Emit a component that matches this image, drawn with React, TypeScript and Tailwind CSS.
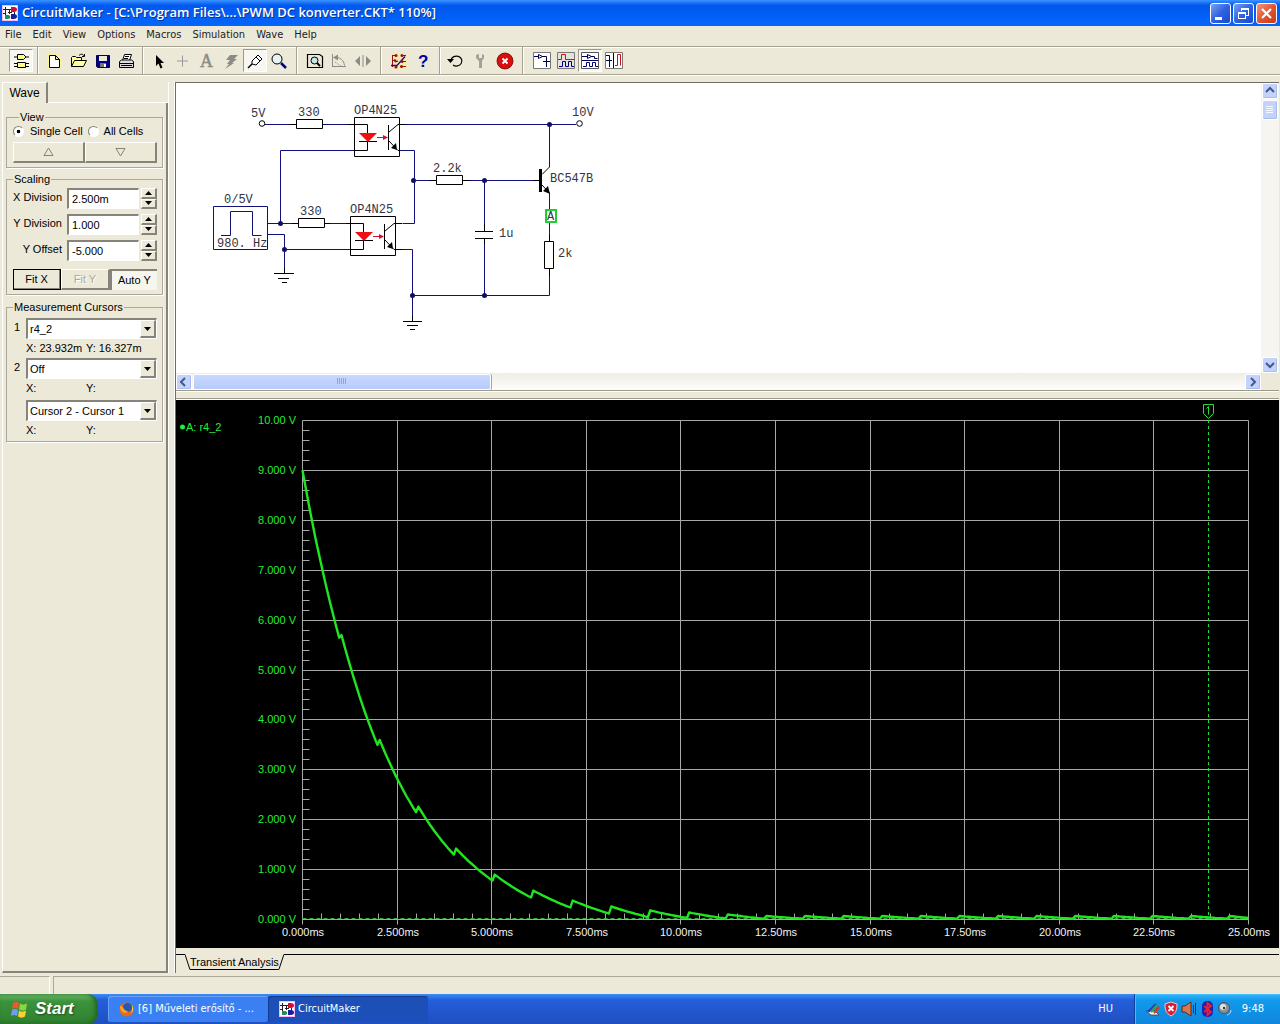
import { useState, type ReactNode } from 'react'
import clsx from 'clsx'

const UI = "font-['Liberation_Sans',Arial,sans-serif]"
const TAHOMA = "font-['DejaVu_Sans_Condensed','DejaVu_Sans',sans-serif]"

const MENUS = ['File', 'Edit', 'View', 'Options', 'Macros', 'Simulation', 'Wave', 'Help']

function AppIcon() {
  return (
    <svg width="16" height="16" viewBox="0 0 16 16" className="shrink-0" aria-hidden="true">
      <rect width="16" height="16" fill="#f9b9f4" />
      <rect x="1" y="1" width="14" height="14" fill="#fff" />
      <path d="M1 4.500h8M3.500 2v9M1 8.500h2M6 7.500h4M7.500 5v4M12.500 7v3" stroke="#222" fill="none" />
      <path d="M9 2h3c4 0 4 5 0 5H9z" fill="#d0102e" />
      <path d="M9 9h3c4 0 4 5 0 5H9z" fill="#16209c" />
      <path d="M3 10h3c3 0 3 4 0 4H3z" fill="#1d8f5a" />
    </svg>
  )
}

/* ---------- title bar and menu ---------- */

function TitleBar() {
  const btn = 'flex size-[21px] items-center justify-center rounded-[3px] border border-white'
  const blue = 'bg-linear-to-br from-[#7aa0f5] via-[#2f62e0] to-[#1a49cc]'
  return (
    <header className="flex h-[26px] shrink-0 items-center bg-linear-to-b from-[#3a92ff] via-[#0058ee] via-20% to-[#0566fb] pr-[3px] pl-[2px]">
      <AppIcon />
      <h1 className="ml-1 flex-1 font-['Open_Sans','Noto_Sans',sans-serif] text-[13px] font-semibold text-white [text-shadow:1px_1px_#0a2f9a]">
        CircuitMaker - [C:\Program Files\...\PWM DC konverter.CKT* 110%]
      </h1>
      <div className="flex gap-[2px]">
        <button type="button" aria-label="Minimize" className={clsx(btn, blue)}>
          <svg width="19" height="19"><path d="M4 13h7v3H4z" fill="#fff" /></svg>
        </button>
        <button type="button" aria-label="Restore" className={clsx(btn, blue)}>
          <svg width="19" height="19" fill="none" stroke="#fff" shapeRendering="crispEdges">
            <path d="M7 7V4.500h7.500V11H12M7 5.500h8M4.500 8.500h7v6h-7zM4 9.500h8" />
          </svg>
        </button>
        <button type="button" aria-label="Close" className={clsx(btn, 'bg-linear-to-br from-[#f0957a] via-[#e2552f] to-[#c83a12]')}>
          <svg width="19" height="19"><path d="M5 5l9 9M14 5l-9 9" stroke="#fff" strokeWidth="2.200" /></svg>
        </button>
      </div>
    </header>
  )
}

function MenuBar() {
  return (
    <nav className={clsx(TAHOMA, 'flex h-[18px] shrink-0 items-center gap-[11px] pl-[5px] text-[11px] text-[#222]')}>
      {MENUS.map((m) => (
        <button key={m} type="button" className="leading-4">{m}</button>
      ))}
    </nav>
  )
}

/* ---------- toolbar ---------- */

function Tool({ label, pressed, children }: { label: string; pressed?: boolean; children: ReactNode }) {
  return (
    <button
      type="button"
      aria-label={label}
      className={clsx(
        'flex h-[23px] w-6 shrink-0 items-center justify-center',
        pressed && 'border-t border-r border-b border-l border-t-[#9c9a8c] border-r-white border-b-white border-l-[#9c9a8c] bg-[#f7f6f0]',
      )}
    >
      <svg width="20" height="20" viewBox="0 0 20 20" className="shrink-0 overflow-visible" fill="none" stroke="#000">
        {children}
      </svg>
    </button>
  )
}

function Separator({ size = 'w-[9px]' }: { size?: string }) {
  return (
    <div className={clsx(size, 'flex h-full shrink-0 justify-center')}>
      <div className="w-[2px] border-r border-l border-r-white border-l-[#a5a294]" />
    </div>
  )
}

function Toolbar() {
  return (
    <div className="mt-[2px] flex h-[29px] shrink-0 items-center border-t border-b border-[#a5a294] pl-[9px] shadow-[inset_0_1px_#fff,0_1px_#fff]">
      <Tool label="Parts" pressed>
        <path d="M6.500 3.500h6l2.500 2.500-2.500 2.500h-6zM3 6h3M15 6h3" fill="#ffff88" />
        <path d="M6.500 11.500h8v5h-8zM3 12.500h3M3 15.500h3M15 12.500h3M15 15.500h3" fill="#ffff88" />
      </Tool>
      <Separator />
      <Tool label="New">
        <path d="M4 3h10l3 4v10H4z" fill="#ffff66" stroke="none" opacity=".6" />
        <path d="M5.500 4.500h6l4 4v8h-10zM11.500 4.500v4h4" fill="#fff" />
      </Tool>
      <Tool label="Open">
        <path d="M3.500 15.500v-9l1-1h3l1 1h5v3M3.500 15.500l3-6h12l-3 6z" fill="#ffff99" />
        <path d="M11 4.500c2-2 4-1.500 5 .5M16.500 3v2.500H14" />
      </Tool>
      <Tool label="Save">
        <path d="M4.500 4.500h13v12H5.500l-1-1z" fill="#000080" stroke="#000055" />
        <path d="M7 5h8v5H7z" fill="#ece9d8" stroke="none" />
        <path d="M8 12h6v4H8z" fill="#777" stroke="none" />
        <path d="M12 13h2v3h-2z" fill="#fff" stroke="none" />
      </Tool>
      <Tool label="Print">
        <path d="M6.500 9.500l2-6h7l-2 6M9 5.500h4M8 7.500h4" fill="#fff" />
        <path d="M3.500 10.500l2-1.500h10l2 1.500v6h-14zM3.500 12.500h14M5 14.500h11" fill="#ddd" />
      </Tool>
      <Separator />
      <Tool label="Select">
        <path d="M7 4v11l2.500-2.500 2 5 2-1-2-4.500H15z" fill="#000" stroke="none" />
      </Tool>
      <Tool label="Wire"><path d="M9.500 4.500v11M4 10h11" stroke="#999" /></Tool>
      <Tool label="Text">
        <text x="3" y="16" fill="#8c8c86" stroke="#8c8c86" strokeWidth=".5" className="font-['Liberation_Serif',serif] text-[18px]">A</text>
      </Tool>
      <Tool label="Delete">
        <path d="M9 4h8l-4 4h3l-5 4h2l-9 6 4-5H6l3-4H5z" fill="#8c8c86" stroke="none" />
      </Tool>
      <Tool label="Probe" pressed>
        <path d="M3 17l4-4" strokeWidth="1.500" />
        <path d="M7 13l0-3 5-5 1-1 4 4-1 1-5 5zM11 6l4 4" fill="#fff" />
      </Tool>
      <Tool label="Zoom">
        <circle cx="8" cy="8" r="5" fill="#e8f4f4" />
        <path d="M12 12l5 5" stroke="#00008b" strokeWidth="2.500" />
      </Tool>
      <Separator size="w-3" />
      <Tool label="Fit to window">
        <path d="M2.500 3.500h12l3 2v11h-15z" strokeWidth="1.200" />
        <circle cx="9.500" cy="9.500" r="3.500" fill="#c9e6e6" />
        <path d="M12 12l3 3" strokeWidth="2" />
      </Tool>
      <Tool label="Rotate">
        <path d="M3.500 3v13M3 15.500h14M5 6.500c6-1 10 3 10.500 8" stroke="#8c8c86" />
        <path d="M4 6.500l5-3v6z" fill="#8c8c86" stroke="none" />
        <path d="M6 11l6 4" stroke="#8c8c86" strokeDasharray="1 1" />
      </Tool>
      <Tool label="Mirror">
        <path d="M7 5v10l-5-5zM13 5v10l5-5z" fill="#8c8c86" stroke="none" />
        <path d="M10 4v12" stroke="#8c8c86" />
      </Tool>
      <Separator size="w-3" />
      <Tool label="Connections">
        <path d="M2 2h16v16H2z" fill="#ffee66" stroke="none" opacity=".35" />
        <path d="M3.500 4v12M3 4.500h4M3 9.500h3M12 15.500h5M13 10.500h4M13 4.500h4" stroke="#a01010" />
        <path d="M2 14.500h6l8-9M6 11l3-1" stroke="#10109a" strokeWidth="1.300" />
        <g fill="#a01010" stroke="none">
          <circle cx="7" cy="4.500" r="1.500" /><circle cx="13" cy="4.500" r="1.500" />
          <circle cx="6" cy="9.500" r="1.300" /><circle cx="13" cy="10.500" r="1.500" />
          <circle cx="7" cy="16" r="1.500" /><circle cx="12.500" cy="15.500" r="1.500" />
        </g>
      </Tool>
      <Tool label="Help">
        <text x="5" y="16" fill="#0000a0" stroke="none" className="font-['Liberation_Sans',sans-serif] text-[17px] font-bold">?</text>
      </Tool>
      <Separator />
      <Tool label="Reset">
        <path d="M5 9a5.500 5 0 1 1 2 5" strokeWidth="1.200" />
        <path d="M1 8h7l-3.500 4z" fill="#000" stroke="none" />
      </Tool>
      <Tool label="Step">
        <path d="M6 4v3l3 3v7h3v-7l2-3V4l-2-1v4H9V3z" fill="#a3a199" stroke="none" />
      </Tool>
      <Tool label="Stop">
        <circle cx="11" cy="10" r="8" fill="#d80f0f" stroke="#7a0000" strokeWidth=".8" />
        <path d="M8.500 7.500l5 5M13.500 7.500l-5 5" stroke="#fff" strokeWidth="1.800" />
      </Tool>
      <Separator size="w-[14px]" />
      <Tool label="Schematic view">
        <path d="M1.500 1.500h17v16h-17z" fill="#fff" stroke="#777" />
        <path d="M2 5.500h4M6.500 3.500v4l4-2zM10 5.500h4.500v5M11 10.500h7M14.500 11v5" stroke="#000050" />
      </Tool>
      <Tool label="Waveform view">
        <path d="M1.500 1.500h17v16h-17z" fill="#e4e2da" stroke="#777" />
        <path d="M2 8.500h3.500v-5h4v5h9" stroke="#d01010" />
        <path d="M3 15.500h3.500v-5h3v5h3v-5h3v5h2.500" stroke="#000080" />
      </Tool>
      <Tool label="Split horizontal" pressed>
        <path d="M1.500 1.500h17v16h-17z" fill="#fff" stroke="#555" />
        <path d="M2 5.500h5M7.500 3.500v4l4-2zM11 5.500h3.500v2h3M2 9.500h16" stroke="#000050" />
        <path d="M3 15.500h3.500v-4h3v4h3v-4h3v4h2.500" stroke="#000080" />
      </Tool>
      <Tool label="Split vertical">
        <path d="M1.500 1.500h17v16h-17z" fill="#fff" stroke="#777" />
        <path d="M2 4.500h3.500v5M2 9.500h6M5.500 10v6M9.500 2v15" stroke="#000050" />
        <path d="M11 14.500h2.500v-11h3v11" stroke="#d01010" />
      </Tool>
    </div>
  )
}

/* ---------- left panel ---------- */

const SUNKEN = 'border-t-2 border-l-2 border-r border-b border-t-[#85837a] border-l-[#85837a] border-r-white border-b-white bg-white'
const RAISED = 'border-t border-l border-r-2 border-b-2 border-t-white border-l-white border-r-[#85837a] border-b-[#85837a] bg-[#ece9d8]'

function Group({ title, className, children }: { title: string; className?: string; children: ReactNode }) {
  return (
    <fieldset className={clsx('min-w-0 border border-[#aca899] pr-[5px] shadow-[1px_1px_#fff]', className)}>
      <legend className="ml-[6px] px-px leading-3">{title}</legend>
      {children}
    </fieldset>
  )
}

function ScaleField({ id, label, value }: { id: string; label: string; value: string }) {
  const [text, setText] = useState(value)
  return (
    <div className="flex h-[21px]">
      <label htmlFor={id} className="w-[55px] text-right leading-[19px]">{label}</label>
      <input
        id={id}
        value={text}
        onChange={(e) => setText(e.target.value)}
        className={clsx(SUNKEN, 'ml-[5px] min-w-0 flex-1 px-[3px]')}
      />
      <div className="ml-[2px] flex w-4 flex-col">
        <button type="button" aria-label={`${label} up`} className={clsx(RAISED, 'flex flex-1 items-center justify-center')}>
          <svg width="7" height="4"><path d="M0 4h7L3.500 0z" /></svg>
        </button>
        <button type="button" aria-label={`${label} down`} className={clsx(RAISED, 'flex flex-1 items-center justify-center')}>
          <svg width="7" height="4"><path d="M0 0h7L3.500 4z" /></svg>
        </button>
      </div>
    </div>
  )
}

function Combo({ label, number, options }: { label: string; number?: string; options: string[] }) {
  return (
    <label className="flex h-[21px]">
      <span className="w-[19px] pl-[7px] leading-[19px]">{number}</span>
      <span className="relative min-w-0 flex-1">
        <select aria-label={label} className={clsx(SUNKEN, 'h-full w-full appearance-none pl-[2px] outline-none')}>
          {options.map((o) => <option key={o}>{o}</option>)}
        </select>
        <span className={clsx(RAISED, 'pointer-events-none absolute top-[2px] right-px bottom-px flex w-4 items-center justify-center')}>
          <svg width="7" height="4"><path d="M0 0h7L3.500 4z" /></svg>
        </span>
      </span>
    </label>
  )
}

function Readout({ x, y }: { x?: string; y?: string }) {
  return (
    <p className="ml-[19px] flex h-[19px] items-center">
      <span className="w-[60px] whitespace-nowrap">X: {x}</span>
      <span className="whitespace-nowrap">Y: {y}</span>
    </p>
  )
}

function WavePanel() {
  const [cells, setCells] = useState('single')
  const radio =
    'size-[11px] appearance-none rounded-full border border-[#85837a] border-r-white border-b-white bg-white checked:bg-[radial-gradient(#000_28%,#fff_32%)]'
  return (
    <aside className={clsx(UI, 'flex w-[168px] shrink-0 flex-col pl-[2px] text-[11px] text-black')}>
      <div className="flex h-[21px]">
        <button type="button" className="w-[46px] border-t border-r-2 border-l border-t-white border-r-[#85837a] border-l-white pb-px text-[12px]">
          Wave
        </button>
        <div className="flex-1 border-b border-white" />
      </div>
      <div className="flex-1 border-r-2 border-b-2 border-l border-r-[#85837a] border-b-[#85837a] border-l-white pt-2 pr-[3px] pl-[3px]">
        <Group title="View" className="h-[57px] pl-[6px]">
          <div className="mt-px flex h-[14px] items-center">
            <label className="flex items-center gap-[6px]">
              <input type="radio" name="cells" className={radio} checked={cells === 'single'} onChange={() => setCells('single')} />
              Single Cell
            </label>
            <label className="ml-[5px] flex items-center gap-[5px]">
              <input type="radio" name="cells" className={radio} checked={cells === 'all'} onChange={() => setCells('all')} />
              All Cells
            </label>
          </div>
          <div className="mt-1 flex h-[21px]">
            <button type="button" aria-label="Previous cell" className={clsx(RAISED, 'flex flex-1 items-center justify-center')}>
              <svg width="11" height="10" fill="none" stroke="#85837a"><path d="M1 8.500h9L5.500 1z" /></svg>
            </button>
            <button type="button" aria-label="Next cell" className={clsx(RAISED, 'flex flex-1 items-center justify-center')}>
              <svg width="11" height="10" fill="none" stroke="#85837a"><path d="M1 1.500h9L5.500 9z" /></svg>
            </button>
          </div>
        </Group>

        <Group title="Scaling" className="mt-[5px] h-[122px]">
          <div className="mt-[3px] flex flex-col gap-[5px]">
            <ScaleField id="x-division" label="X Division" value="2.500m" />
            <ScaleField id="y-division" label="Y Division" value="1.000" />
            <ScaleField id="y-offset" label="Y Offset" value="-5.000" />
          </div>
          <div className="mt-2 flex h-[21px] pl-[6px]">
            <button type="button" className={clsx(RAISED, 'flex-1 outline-1 -outline-offset-1 outline-black')}>Fit X</button>
            <button type="button" disabled className={clsx(RAISED, 'flex-1 text-[#aca899] [text-shadow:1px_1px_#fff]')}>Fit Y</button>
            <button type="button" className="flex-1 border-t-2 border-l-2 border-[#85837a] bg-[#f6f5ee]">Auto Y</button>
          </div>
        </Group>

        <Group title="Measurement Cursors" className="mt-[6px] h-[141px]">
          <div className="mt-[5px]">
            <Combo label="Cursor 1" number="1" options={['r4_2', 'Off']} />
            <Readout x="23.932m" y="16.327m" />
            <Combo label="Cursor 2" number="2" options={['Off', 'r4_2']} />
            <Readout />
          </div>
          <div className="mt-[2px]">
            <Combo label="Cursor difference" options={['Cursor 2 - Cursor 1']} />
            <Readout />
          </div>
        </Group>
      </div>
    </aside>
  )
}

/* ---------- schematic ---------- */

function Opto({ x, y }: { x: number; y: number }) {
  return (
    <g transform={`translate(${x} ${y})`} stroke="#000" fill="none">
      <path d="M.500 .500h45v39h-45zM0 7.500h13.500V16M0 33.500h13.500V24M5 24.500h18" />
      <path d="M5 16h18l-9 9z" fill="#f01010" stroke="none" />
      <path d="M23 20.500h7" stroke="#d0102c" />
      <path d="M29 18l5 2.500-5 2.500z" fill="#d0102c" stroke="none" />
      <path d="M34.500 8v25M35 15l9-7.500h2M35 24l9 9.500h2" />
      <path d="M43 33l-6-2 5-5z" fill="#000" stroke="none" />
    </g>
  )
}

function Schematic() {
  return (
    <svg
      viewBox="176 83 460 290"
      width="460"
      height="290"
      className="shrink-0 font-['Liberation_Mono','Courier_New',monospace] text-[12px]"
      aria-label="Circuit schematic"
    >
      <g fill="none" stroke="#10107a">
        <path d="M265 124.500h25M322 124.500h26M354 150.500h-73.500v73M268 223.500h24M330 223.500h16M268 234.500h16.500v34M284 249.500h66" />
        <path d="M406 124.500h170M549.500 124v43M400 150.500h14.500v73h-12M414 180.500h16M470 180.500h63M484.500 180v44M484.500 240v56" />
        <path d="M402 249.500h10.500v68M412 295.500h137.500v-20M549.500 193v42M213.500 206.500h54v43h-54zM221 235.500h9.500v-24h22v24h9" />
      </g>
      <g fill="none" stroke="#000">
        <path d="M290 124.500h6M348 124.500h6M292 223.500h6M324 223.500h6M346 223.500h4M400 124.500h6M396 223.500h6M396 249.500h6M430 180.500h6M463 180.500h7M533 180.500h6" />
        <path d="M296.500 119.500h26v9h-26zM298.500 218.500h26v9h-26zM436.500 175.500h26v9h-26zM544.500 241.500h9v27h-9z" />
        <path d="M475 231.500h18M475 238.500h18M484.500 224v7M484.500 239v5M549.500 235v6M549.500 269v7" />
        <path d="M284.500 268v5M274 273.500h20M278 278.500h11M282 282.500h5M412.500 316v5M403 321.500h19M407 325.500h11M410 329.500h5" />
        <path d="M549.500 167l-7.500 7.500M542 185l7.500 8" />
        <circle cx="262" cy="123.500" r="2.800" fill="#fff" />
        <circle cx="579.500" cy="123.500" r="2.800" fill="#fff" />
      </g>
      <path d="M539 169h3v23h-3zM550 194l-7-3 5-5z" />
      <g fill="#10105e">
        <circle cx="280.500" cy="223.500" r="2.500" />
        <circle cx="284.500" cy="249.500" r="2.500" />
        <circle cx="413.500" cy="180.500" r="2.500" />
        <circle cx="484.500" cy="180.500" r="2.500" />
        <circle cx="549.500" cy="124.500" r="2.500" />
        <circle cx="412.500" cy="295.500" r="2.500" />
        <circle cx="484.500" cy="295.500" r="2.500" />
      </g>
      <Opto x={354} y={117} />
      <Opto x={350} y={216} />
      <rect x="546" y="210" width="10" height="12" fill="#fff" stroke="#22cc33" strokeWidth="2" />
      <g fill="#333344">
        <text x="251" y="117">5V</text>
        <text x="298" y="116">330</text>
        <text x="354" y="114">OP4N25</text>
        <text x="224" y="203">0/5V</text>
        <text x="217" y="247">980. Hz</text>
        <text x="300" y="215">330</text>
        <text x="350" y="213">OP4N25</text>
        <text x="433" y="172">2.2k</text>
        <text x="499" y="237">1u</text>
        <text x="558" y="257">2k</text>
        <text x="550" y="182">BC547B</text>
        <text x="572" y="116">10V</text>
        <text x="547" y="220">A</text>
      </g>
    </svg>
  )
}

const ARROWS = {
  up: 'M3 8l4-4 4 4',
  down: 'M3 5l4 4 4-4',
  left: 'M8 3L4 7l4 4',
  right: 'M5 3l4 4-4 4',
}

function ScrollButton({ dir }: { dir: keyof typeof ARROWS }) {
  return (
    <button type="button" aria-label={`Scroll ${dir}`} className="flex size-4 shrink-0 items-center justify-center rounded-[2px] border border-white bg-[#c3d3fd] shadow-[inset_-1px_-1px_#a9bcee]">
      <svg width="14" height="14" fill="none" stroke="#43598a" strokeWidth="2"><path d={ARROWS[dir]} /></svg>
    </button>
  )
}

function SchematicPane() {
  return (
    <section className="shrink-0 bg-white">
      <div className="flex">
        <div className="min-w-0 flex-1 overflow-hidden"><Schematic /></div>
        <div className="flex w-[18px] flex-col items-center bg-[#f6f5f0]">
          <ScrollButton dir="up" />
          <div className="mt-px flex h-5 w-4 items-center justify-center rounded-[2px] border border-white bg-[#c3d3fd] shadow-[inset_-1px_-1px_#a9bcee]">
            <svg width="8" height="8"><path d="M0 .500h7M0 2.500h7M0 4.500h7M0 6.500h7" stroke="#f4f8ff" /></svg>
          </div>
          <div className="flex-1" />
          <ScrollButton dir="down" />
        </div>
      </div>
      <div className="flex h-[18px] border-b border-[#9c9a8c] bg-[#ece9d8]">
        <div className="flex flex-1 items-center bg-linear-to-b from-[#efede4] to-[#fdfdfb]">
          <ScrollButton dir="left" />
          <div className="ml-px flex h-4 w-[27.5%] items-center justify-center rounded-[2px] border border-white bg-linear-to-b from-[#c9d8fe] to-[#b7cbfa] shadow-[1px_0_#8fa5d8]">
            <svg width="10" height="7"><path d="M.500 0v6M2.500 0v6M4.500 0v6M6.500 0v6M8.500 0v6" stroke="#8ea6dd" /></svg>
          </div>
          <div className="flex-1" />
          <ScrollButton dir="right" />
        </div>
        <div className="w-[18px]" />
      </div>
    </section>
  )
}

/* ---------- waveform ---------- */

const PLOT = { left: 126.5, top: 20.5, width: 946, height: 499 }
const px = (ms: number) => PLOT.left + (ms / 25) * PLOT.width
const py = (volts: number) => PLOT.top + PLOT.height - (volts / 10) * PLOT.height

const X_LABELS = ['0.000ms', '2.500ms', '5.000ms', '7.500ms', '10.00ms', '12.50ms', '15.00ms', '17.50ms', '20.00ms', '22.50ms', '25.00ms']
const Y_LABELS = ['0.000 V', '1.000 V', '2.000 V', '3.000 V', '4.000 V', '5.000 V', '6.000 V', '7.000 V', '8.000 V', '9.000 V', '10.00 V']

// [ms, trough, next peak] at every PWM pulse
const PULSES: [number, number, number][] = [
  [0.97, 5.65, 5.7], [1.98, 3.5, 3.6], [3.0, 2.15, 2.26], [4.0, 1.3, 1.42],
  [5.02, 0.78, 0.9], [6.04, 0.44, 0.58], [7.08, 0.24, 0.38], [8.1, 0.12, 0.26],
  [9.13, 0.05, 0.18], [10.16, 0.03, 0.14], [11.18, 0.02, 0.1],
]
for (let t = 12.2; t < 25; t += 1.02) PULSES.push([t, 0.015, 0.07])

// the output sinks towards a level a little below zero
const FLOOR = 0.5

function trace() {
  const points: string[] = []
  let t0 = 0
  let v0 = 9
  for (const [t, low, high] of [...PULSES, [25, 0.03, 0.03]]) {
    for (let i = 0; i <= 12; i++) {
      const f = i / 12
      const v = (v0 + FLOOR) * ((low + FLOOR) / (v0 + FLOOR)) ** f - FLOOR
      points.push(`${px(t0 + (t - t0) * f).toFixed(1)},${py(v).toFixed(1)}`)
    }
    t0 = Math.min(t + 0.06, 25)
    v0 = high
  }
  return points.join(' ')
}

function Waveform() {
  const right = PLOT.left + PLOT.width
  const bottom = PLOT.top + PLOT.height
  const cursor = px(23.932)
  return (
    <svg viewBox="0 0 1103 548" className={clsx(UI, 'min-h-0 w-full flex-1 bg-black text-[11px]')} aria-label="Transient analysis waveform">
      <g stroke="#a8a8a8">
        {X_LABELS.map((l, i) => <path key={l} d={`M${Math.floor(px(i * 2.5)) + 0.5} ${PLOT.top}V${bottom + 5}`} />)}
        {Y_LABELS.map((l, i) => <path key={l} d={`M${PLOT.left} ${Math.floor(py(i)) + 0.5}H${right}`} />)}
        {Array.from({ length: 50 }, (_, i) => (
          <path key={i} d={`M${PLOT.left} ${Math.floor(py(i / 5)) + 0.5}h7M${Math.floor(px(i / 2)) + 0.5} ${bottom}v-6`} />
        ))}
      </g>
      <path d={`M${PLOT.left} ${bottom - 1}H${right}`} stroke="#2fae3a" strokeDasharray="4 3" />
      <polyline points={trace()} fill="none" stroke="#1fe61f" strokeWidth="2.400" strokeLinejoin="round" />
      <g fill="none" stroke="#22dd33">
        <path d={`M${Math.floor(cursor) + 0.5} 20V${bottom}`} strokeDasharray="3 3" />
        <path d="M1027.500 4.500h10v9l-5 5-5-5zM1030.500 8.500l2-2v8" />
      </g>
      <circle cx="6.500" cy="27" r="2.500" fill="#22ee33" />
      <text x="10" y="31" fill="#22ee33">A: r4_2</text>
      <g fill="#22ee33" textAnchor="end">
        {Y_LABELS.map((l, i) => <text key={l} x="120" y={Math.floor(py(i)) + 4}>{l}</text>)}
      </g>
      <g fill="#f2f2f2" textAnchor="middle">
        {X_LABELS.map((l, i) => <text key={l} x={Math.floor(px(i * 2.5)) + 1} y="536">{l}</text>)}
      </g>
    </svg>
  )
}

function SheetTabs() {
  return (
    <div className={clsx(UI, 'flex h-[25px] shrink-0 items-start pt-[6px] text-[11px]')}>
      <div className="w-[9px] border-t border-black" />
      <button type="button" className="relative h-4 px-[5px] whitespace-nowrap text-black">
        Transient Analysis
        <svg viewBox="0 0 100 16" preserveAspectRatio="none" className="absolute inset-0 h-full w-full" fill="none" stroke="#000">
          <path d="M0 .500L5 15.500H95L100 .500" />
        </svg>
      </button>
      <div className="flex-1 border-t border-black" />
    </div>
  )
}

/* ---------- taskbar ---------- */

function Taskbar() {
  const task = 'flex h-[26px] w-40 items-center rounded-[3px] pl-[11px] text-left'
  return (
    <footer className={clsx(TAHOMA, 'flex h-[30px] shrink-0 items-center bg-linear-to-b from-[#3f8cf3] via-[#245edb] via-20% to-[#1f4fc0] text-[11px] text-white')}>
      <button type="button" className="flex h-full w-[98px] items-center gap-[6px] rounded-r-[10px] bg-linear-to-b from-[#6cbb6c] via-[#3c933c] via-25% to-[#2f7f2f] pl-[10px] shadow-[inset_-3px_0_4px_#226622]">
        <svg width="19" height="19" viewBox="0 0 19 19">
          <path d="M3 3c2-1.500 4-1.500 6 0L8 9C6 7.500 4 7.500 2 9z" fill="#f0582a" />
          <path d="M10 3.500c2 1.500 4 1.500 7 0l-1 6c-2 1.500-5 1.500-7 0z" fill="#8cd63f" />
          <path d="M2 10c2-1.500 4-1.500 6 0l-1 6c-2-1.500-4-1.500-6 0z" fill="#6f9df5" />
          <path d="M9 10.500c2 1.500 4 1.500 7 0l-1 6c-2 1.500-5 1.500-7 0z" fill="#fbd12f" />
        </svg>
        <span className="font-['Liberation_Sans',Arial,sans-serif] text-[17px] font-bold italic [text-shadow:1px_1px_2px_#1a4d1a]">Start</span>
      </button>
      <button type="button" className={clsx(task, 'ml-[10px] gap-1 bg-[#3a80f3] shadow-[inset_1px_1px_#6aa2fa]')}>
        <svg width="15" height="15" viewBox="0 0 15 15" className="shrink-0">
          <circle cx="7.500" cy="7.500" r="7" fill="#e8681c" />
          <circle cx="8.500" cy="5.500" r="4.500" fill="#2d58a8" />
          <path d="M1 4c2 0 3 1 4 3 1 1.500 2 2 4 2-1 2-4 2.500-6 .500C1.500 8.500 1 6 1 4z" fill="#f7a823" />
          <path d="M13 3c1.500 2 2 6-1 9 1-2 1.500-5 1-9z" fill="#fbd33c" />
        </svg>
        [6] Műveleti erősítő - ...
      </button>
      <button type="button" className={clsx(task, 'gap-[3px] bg-[#1c4fb8] shadow-[inset_1px_1px_#153c90]')}>
        <AppIcon />
        CircuitMaker
      </button>
      <div className="flex-1" />
      <span className="mr-[21px]">HU</span>
      <div className="flex h-full w-[146px] items-center border-l border-[#0d3f9e] bg-linear-to-b from-[#35b5f8] via-[#119aec] via-20% to-[#0f86dc] pl-[10px] shadow-[inset_1px_1px_#3fc0ff]">
        <div className="flex flex-1 gap-[2px]">
          <svg width="16" height="16">
            <path d="M1 10h9l4 4H6z" fill="#f0f0f0" stroke="#444" strokeWidth=".8" />
            <path d="M3 11l8-8" stroke="#2438c8" strokeWidth="2.200" /><path d="M6 11l6-7" stroke="#2aa84a" strokeWidth="2.200" />
            <path d="M9 12l5-6" stroke="#e03020" strokeWidth="2.200" />
          </svg>
          <svg width="16" height="16">
            <path d="M8 1l6 2c0 6-1 9-6 12C3 12 2 9 2 3z" fill="#d51f30" stroke="#f2c6ca" />
            <path d="M5.500 5l5 5M10.500 5l-5 5" stroke="#fff" strokeWidth="1.800" />
          </svg>
          <svg width="16" height="16">
            <path d="M1 5h3l6-4v14l-6-4H1z" fill="#d8764c" stroke="#5d2a18" />
            <path d="M12.500 4v8M14.500 2v12" fill="none" stroke="#20304a" />
          </svg>
          <svg width="16" height="16">
            <rect x="3" y="0" width="11" height="16" rx="5" fill="#1a1fc0" />
            <path d="M5 5l7 6-3.500 3V2L12 5l-7 6" fill="none" stroke="#e8202c" strokeWidth="2" />
          </svg>
          <svg width="16" height="16">
            <circle cx="7" cy="7" r="5.500" fill="#8b9096" stroke="#4d5358" />
            <circle cx="6" cy="6" r="3" fill="#e2e4e6" /><circle cx="7" cy="7" r="1.200" fill="#333" />
            <path d="M10 14c2-.500 4-2 4-5" fill="none" stroke="#b9d6f5" />
          </svg>
        </div>
        <time className="mr-4">9:48</time>
      </div>
    </footer>
  )
}

export default function App() {
  return (
    <div className="flex h-screen min-h-[720px] flex-col bg-[#ece9d8]">
      <TitleBar />
      <MenuBar />
      <Toolbar />
      <div className="mt-[7px] flex min-h-0 flex-1 pr-px">
        <WavePanel />
        <div className="w-[7px] shrink-0 border-r border-l border-white" />
        <main className="flex min-w-0 flex-1 flex-col border-t border-l border-[#6f6d64]">
          <SchematicPane />
          <div className="flex h-[9px] shrink-0 flex-col border-t border-b border-white">
            <div className="flex-1 border-b border-[#9c9a8c]" />
          </div>
          <Waveform />
          <SheetTabs />
        </main>
      </div>
      <div className="mt-[3px] flex h-[18px] shrink-0 gap-[3px]">
        <div className="w-[50px] border-t border-r border-t-[#aca899] border-r-white" />
        <div className="flex-1 border-t border-l border-[#aca899]" />
      </div>
      <Taskbar />
    </div>
  )
}
